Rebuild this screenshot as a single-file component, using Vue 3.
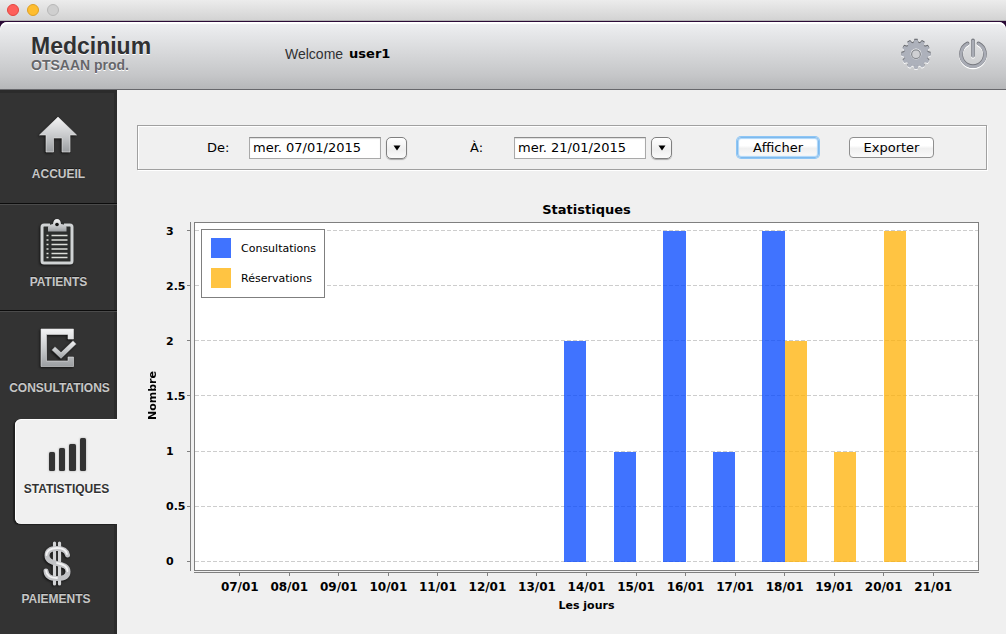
<script setup>
import { ref } from 'vue'

const dateFrom = ref('mer. 07/01/2015')
const dateTo = ref('mer. 21/01/2015')

const maxValue = 3
const ticks = ['3', '2.5', '2', '1.5', '1', '0.5', '0']
const series = [
  { key: 'consultations', label: 'Consultations' },
  { key: 'reservations', label: 'Réservations' },
]
const days = [
  { day: '07/01', consultations: 0, reservations: 0 },
  { day: '08/01', consultations: 0, reservations: 0 },
  { day: '09/01', consultations: 0, reservations: 0 },
  { day: '10/01', consultations: 0, reservations: 0 },
  { day: '11/01', consultations: 0, reservations: 0 },
  { day: '12/01', consultations: 0, reservations: 0 },
  { day: '13/01', consultations: 0, reservations: 0 },
  { day: '14/01', consultations: 2, reservations: 0 },
  { day: '15/01', consultations: 1, reservations: 0 },
  { day: '16/01', consultations: 3, reservations: 0 },
  { day: '17/01', consultations: 1, reservations: 0 },
  { day: '18/01', consultations: 3, reservations: 2 },
  { day: '19/01', consultations: 0, reservations: 1 },
  { day: '20/01', consultations: 0, reservations: 3 },
  { day: '21/01', consultations: 0, reservations: 0 },
]

function barHeight(value) {
  return { height: (value / maxValue) * 100 + '%' }
}

const gearTeeth = Array.from({ length: 12 }, (_, i) => i * 30)
</script>

<template>
  <div class="window">
    <div class="titlebar">
      <span class="light close"></span>
      <span class="light minimize"></span>
      <span class="light zoom"></span>
    </div>

    <div class="frame">
      <header class="header">
        <div class="brand">
          <h1>Medcinium</h1>
          <p>OTSAAN prod.</p>
        </div>
        <p class="welcome">Welcome <strong>user1</strong></p>
        <div class="tools">
          <button type="button" aria-label="Paramètres">
            <svg width="34" height="34" viewBox="-17 -17 34 34">
              <defs>
                <g id="gearShape">
                  <circle r="11.6" />
                  <path
                    v-for="angle in gearTeeth"
                    :key="angle"
                    d="M-3.2 -11 Q-1.8 -12 -1.6 -14.6 H1.6 Q1.8 -12 3.2 -11 Z"
                    :transform="`rotate(${angle})`"
                  />
                </g>
              </defs>
              <use href="#gearShape" fill="#fff" transform="translate(0 1.2)" />
              <use href="#gearShape" fill="#5f6166" transform="translate(0 -0.6)" />
              <use href="#gearShape" fill="#adb1bb" transform="translate(0 0.4)" />
              <circle r="5.4" fill="#fff" />
              <circle r="4.4" cy="0.3" fill="#cfd0d3" stroke="#85888e" stroke-width="1.2" />
            </svg>
          </button>
          <button type="button" aria-label="Quitter">
            <svg width="34" height="34" viewBox="-17 -17 34 34" fill="none" stroke-linecap="round">
              <g stroke="#fff" stroke-width="3.8" transform="translate(0 1.3)">
                <path d="M-5.5 -10.6 A12 12 0 1 0 5.5 -10.6" />
                <path d="M0 -13.5 V1.5" />
              </g>
              <g stroke="#75777d" stroke-width="3.8">
                <path d="M-5.5 -10.6 A12 12 0 1 0 5.5 -10.6" />
                <path d="M0 -13.5 V1.5" />
              </g>
              <g stroke="#a9acb5" stroke-width="2.8" transform="translate(0 0.6)">
                <path d="M-5.5 -10.6 A12 12 0 1 0 5.5 -10.6" />
                <path d="M0 -13.5 V1.5" />
              </g>
            </svg>
          </button>
        </div>
      </header>

      <div class="body">
        <nav class="sidebar">
          <a href="#accueil" class="item first">
            <svg class="icon" width="48" height="48" viewBox="1 0 48 48">
              <defs>
                <linearGradient id="metal" x1="0" y1="0" x2="0" y2="1">
                  <stop offset="0" stop-color="#f4f4f5" />
                  <stop offset="0.55" stop-color="#c6c8ca" />
                  <stop offset="1" stop-color="#9b9ea1" />
                </linearGradient>
              </defs>
              <path
                d="M24 7 L42.500 25 H36 V42 H28 V28 H19.500 V42 H12 V25 H5.500 Z"
                fill="url(#metal)" stroke="#e9e9ea" stroke-width="0.6"
              />
            </svg>
            <span>ACCUEIL</span>
          </a>

          <a href="#patients" class="item">
            <svg class="icon" width="48" height="48" viewBox="1 0 48 48">
              <rect x="8" y="7" width="30" height="38" rx="2" fill="#2c2e2d" stroke="#d0d3d4" stroke-width="3" />
              <path d="M16 4 H30 V13 H16 Z" fill="#2c2e2d" />
              <path
                d="M14 13.500 V9.500 Q14 7 17 6.500 L19 6 Q19.500 1 23 1 Q26.500 1 27 6 L29.500 6.500 Q32.500 7 32.500 9.500 V13.500 Z"
                fill="url(#metal)"
              />
              <circle cx="23" cy="6.500" r="1.800" fill="#151515" />
              <g stroke="#dcded9" stroke-width="1.500">
                <path d="M17.500 17.500 H33.500 M17.500 22 H33.500 M17.500 26.500 H33.500 M17.500 31 H33.500 M17.500 35.500 H33.500 M17.500 39.500 H33.500" />
                <path d="M12.500 17.500 H14.500 M12.500 22 H14.500 M12.500 26.500 H14.500 M12.500 31 H14.500 M12.500 35.500 H14.500 M12.500 39.500 H14.500" />
              </g>
            </svg>
            <span>PATIENTS</span>
          </a>

          <a href="#consultations" class="item">
            <svg class="icon" width="48" height="48" viewBox="0 0 48 48">
              <path
                d="M5 5 H37.500 V15 H32 V10.500 H10.500 V37 H32 V33 H37.500 V42.500 H5 Z"
                fill="url(#metal)" stroke="#e0e1e3" stroke-width="0.600"
              />
              <path d="M15.500 26 L19 22.500 L25 28 L37 16.500 L40.500 20 L25 35 Z" fill="url(#metal)" stroke="#2b2b2b" stroke-width="0.500" />
            </svg>
            <span>CONSULTATIONS</span>
          </a>

          <a href="#statistiques" class="item active" aria-current="page">
            <svg class="icon" width="48" height="48" viewBox="0 0 48 48" fill="#333">
              <rect x="6" y="27" width="6" height="19" rx="1.500" />
              <rect x="16" y="23" width="6" height="23" rx="1.500" />
              <rect x="26" y="19" width="7" height="27" rx="1.500" />
              <rect x="37" y="13" width="6" height="33" rx="1.500" />
            </svg>
            <span>STATISTIQUES</span>
          </a>

          <a href="#paiements" class="item last">
            <svg class="icon" width="48" height="48" viewBox="0 0 48 48" fill="none">
              <g stroke-linecap="round">
                <path d="M22.500 8 V49 M27.500 8 V49" stroke="#d2d3d5" stroke-width="3.200" />
                <path
                  d="M35.500 20 C34.500 15.500 30.500 13.500 25 13.500 C18.500 13.500 15 16 15 20.500 C15 25.500 19.500 27 25 28.500 C31.500 30 36 31.500 36 36.500 C36 41.500 31.500 43.500 25 43.500 C18.500 43.500 14.500 41.500 14 36"
                  stroke="#c2c3c6" stroke-width="5"
                />
                <path
                  d="M35 19 C34 15 30.500 13 25 13 C18.500 13 14.500 16 14.500 20 M25 28 C31.500 29.500 35.500 31 35.500 36 M14 35.500 C14.500 40 18.500 43 25 43"
                  stroke="#f2f2f3" stroke-width="1.800"
                />
              </g>
            </svg>
            <span>PAIEMENTS</span>
          </a>
        </nav>

        <main class="content">
          <form class="filters" @submit.prevent>
            <label for="date-from">De:</label>
            <input id="date-from" v-model="dateFrom" type="text" />
            <button type="button" class="picker" aria-label="Choisir la date de début">
              <svg width="8" height="6" viewBox="0 0 8 6"><path d="M0.500 0.500 H7.500 L4 5.500 Z" fill="#000" /></svg>
            </button>
            <label for="date-to" class="second">À:</label>
            <input id="date-to" v-model="dateTo" type="text" />
            <button type="button" class="picker" aria-label="Choisir la date de fin">
              <svg width="8" height="6" viewBox="0 0 8 6"><path d="M0.500 0.500 H7.500 L4 5.500 Z" fill="#000" /></svg>
            </button>
            <div class="actions">
              <button type="submit" class="action primary">Afficher</button>
              <button type="button" class="action">Exporter</button>
            </div>
          </form>

          <section class="chart">
            <h2>Statistiques</h2>
            <div class="y-title"><span>Nombre</span></div>
            <div class="y-axis">
              <span v-for="tick in ticks" :key="tick" class="y-tick">{{ tick }}</span>
            </div>
            <div class="plot">
              <div class="gridlines">
                <i v-for="tick in ticks" :key="tick"></i>
              </div>
              <div class="bars">
                <div v-for="d in days" :key="d.day" class="group">
                  <div v-for="s in series" :key="s.key" class="bar" :class="s.key" :style="barHeight(d[s.key])"></div>
                </div>
              </div>
              <ul class="legend">
                <li v-for="s in series" :key="s.key">
                  <span class="swatch" :class="s.key"></span>{{ s.label }}
                </li>
              </ul>
            </div>
            <div class="x-axis">
              <span v-for="d in days" :key="d.day" class="x-tick">{{ d.day }}</span>
            </div>
            <div class="x-title">Les jours</div>
          </section>
        </main>
      </div>
    </div>
  </div>
</template>

<style>
body {
  margin: 0;
}
</style>

<style scoped>
.window {
  display: flex;
  flex-direction: column;
  min-height: 100vh;
  background: #2a0a36;
  color: #000;
  font-family: "DejaVu Sans", "Noto Sans", sans-serif;
  font-size: 13px;
}

h1,
h2,
p,
ul {
  margin: 0;
  padding: 0;
}

button {
  font: inherit;
  color: inherit;
  padding: 0;
}

.titlebar {
  box-sizing: border-box;
  display: flex;
  align-items: center;
  gap: 8px;
  height: 21px;
  margin-bottom: 1px;
  padding-left: 7px;
  border-bottom: 1px solid #b0b0b0;
  background: linear-gradient(#ececec, #d3d3d3);
}

.light {
  box-sizing: border-box;
  width: 12px;
  height: 12px;
  border: 1px solid;
  border-radius: 50%;
}

.close {
  background: #fe5f5a;
  border-color: #e2463f;
}

.minimize {
  background: #febd2f;
  border-color: #dfa023;
}

.zoom {
  background: #cfcfcf;
  border-color: #b8b8b8;
}

.frame {
  flex: 1;
  display: flex;
  flex-direction: column;
  border-radius: 7px 7px 0 0;
  overflow: hidden;
  background: #f0f0f0;
}

.header {
  box-sizing: border-box;
  display: flex;
  align-items: flex-start;
  height: 68px;
  padding: 0 16px 0 31px;
  border-bottom: 1px solid #67676b;
  border-radius: 7px 7px 0 0;
  background: linear-gradient(#eff0f2, #d5d6d8 50%, #c5c6c8 80%, #b6b7b9);
  box-shadow: inset 0 2px 0 #fff;
}

.brand {
  width: 254px;
  padding-top: 12px;
  font-family: "Liberation Sans", Arial, sans-serif;
  text-shadow: 0 1px 0 #fff;
}

.brand h1 {
  font-size: 23px;
  line-height: 24px;
  color: #303133;
}

.brand p {
  font-size: 14px;
  font-weight: bold;
  line-height: 14px;
  color: #65666a;
}

.welcome {
  display: flex;
  align-items: center;
  gap: 6px;
  height: 63px;
  font-family: "Liberation Sans", Arial, sans-serif;
  font-size: 14px;
  color: #303133;
}

.welcome strong {
  font-family: "DejaVu Sans", sans-serif;
  font-size: 13px;
  color: #000;
}

.tools {
  display: flex;
  gap: 23px;
  margin-left: auto;
  padding-top: 15px;
}

.tools button {
  display: flex;
  border: 0;
  background: none;
}

.body {
  flex: 1;
  display: flex;
}

.sidebar {
  box-sizing: border-box;
  flex: none;
  display: flex;
  flex-direction: column;
  width: 117px;
  background: linear-gradient(to left, #2b2b2b 3px, #333 3px);
  box-shadow: inset 0 3px 0 #2b2b2b;
}

.item {
  box-sizing: border-box;
  display: flex;
  flex-direction: column;
  align-items: center;
  gap: 8px;
  min-height: 107px;
  padding-top: 13px;
  border-top: 1px solid #4b4b4b;
  border-bottom: 1px solid #0c0c0c;
  font-family: "Liberation Sans", Arial, sans-serif;
  font-size: 12px;
  font-weight: bold;
  line-height: 16px;
  text-decoration: none;
  color: #c6c6c6;
  text-shadow: 0 -1px 0 #1c1c1c;
}

.icon {
  overflow: visible;
  filter: drop-shadow(-1px 1px 1px #111);
}

.item.first {
  min-height: 114px;
  padding-top: 20px;
  border-top: 0;
}

.item:nth-child(3) {
  min-height: 108px;
  padding: 12px 0 0 2px;
  border-bottom: 0;
}

.item.active {
  min-height: 105px;
  margin-left: 15px;
  padding: 5px 0 0 1px;
  border-top: 1px solid #fff;
  border-bottom: 0;
  border-radius: 6px 0 0 6px;
  background: #f0f0f0;
  box-shadow: inset 1px 0 0 #fff, -2px 1px 1px #202020;
  color: #333;
  text-shadow: 0 1px 0 #fff;
}

.active .icon {
  filter: drop-shadow(0 0 1px #aaa);
}

.item.last {
  padding: 11px 5px 0 0;
  border: 0;
}

.content {
  flex: 1;
  display: flex;
  flex-direction: column;
  min-width: 0;
}

.filters {
  box-sizing: border-box;
  display: flex;
  align-items: center;
  height: 45px;
  margin: 35px 19px 0 20px;
  padding-left: 69px;
  border: 1px solid #a0a0a0;
  box-shadow: inset 1px 1px 0 #fff, 1px 1px 0 #fff;
}

.filters label {
  width: 42px;
}

.filters .second {
  width: 44px;
  margin-left: 63px;
}

.filters input {
  box-sizing: border-box;
  width: 132px;
  height: 22px;
  padding: 0 3px;
  border: 1px solid #a9a9a9;
  border-top-color: #8c8c8c;
  background: #fff;
  box-shadow: inset 0 1px 1px #ddd;
  font: inherit;
}

.picker {
  display: flex;
  align-items: center;
  justify-content: center;
  box-sizing: border-box;
  width: 21px;
  height: 22px;
  margin-left: 5px;
  border: 1px solid #808080;
  border-radius: 5px;
  background: linear-gradient(#fff, #efefef 60%, #fafafa);
  box-shadow: 0 1px 1px #aaa;
}

.actions {
  display: flex;
  gap: 30px;
  margin-left: 65px;
}

.action {
  box-sizing: border-box;
  width: 85px;
  height: 21px;
  border: 1px solid #8f8f8f;
  border-radius: 4px;
  background: linear-gradient(#fff, #fff 40%, #f0f0f0 55%, #fafafa);
}

.action.primary {
  width: 82px;
  border-color: #7fb9ec;
  box-shadow: 0 0 0 1px #8dc6f6, inset 0 0 1px 1px #a9d5fa;
}

.chart {
  flex: 1;
  display: grid;
  grid-template-columns: 12px 33px 1fr;
  grid-template-rows: 20px 1fr auto auto;
  margin-top: 30px;
  padding: 0 27px 20px 29px;
}

.chart h2 {
  grid-column: 3;
  margin-left: 3px;
  font-size: 13px;
  line-height: 20px;
  text-align: center;
}

.y-title {
  grid-column: 1;
  grid-row: 2;
  display: flex;
  align-items: center;
  justify-content: center;
  font-size: 11px;
  font-weight: bold;
}

.y-title span {
  writing-mode: vertical-rl;
  transform: rotate(180deg);
}

.y-axis {
  grid-column: 2;
  grid-row: 2;
  display: flex;
  flex-direction: column;
  justify-content: space-between;
  margin-top: 2px;
  padding: 9px 0 9px 8px;
  border-right: 1px solid #7f7f7f;
  font-size: 11px;
  font-weight: bold;
}

.y-tick {
  display: flex;
  align-items: center;
  justify-content: space-between;
  height: 0;
}

.y-tick::after {
  content: "";
  width: 3px;
  height: 1px;
  margin-top: -1px;
  background: #7f7f7f;
}

.plot {
  grid-column: 3;
  grid-row: 2;
  position: relative;
  display: grid;
  margin: 2px 0 0 3px;
  padding: 8px 0;
  border: 1px solid #7f7f7f;
  background: #fff;
}

.gridlines,
.bars {
  grid-area: 1 / 1;
}

.gridlines {
  display: flex;
  flex-direction: column;
  justify-content: space-between;
}

.gridlines i {
  height: 1px;
  margin: -1px 0 0;
  background: repeating-linear-gradient(to right, #cdcdcd 0 4px, transparent 4px 6px);
}

.bars {
  display: flex;
  padding: 0 20px;
  z-index: 1;
}

.group {
  flex: 1;
  display: flex;
  align-items: flex-end;
  justify-content: center;
}

.bar {
  width: 45%;
}

.consultations {
  background: rgba(0, 68, 255, 0.75);
}

.reservations {
  background: rgba(255, 176, 3, 0.75);
}

.legend {
  position: absolute;
  top: 6px;
  left: 6px;
  z-index: 2;
  display: flex;
  flex-direction: column;
  gap: 10px;
  padding: 8px 8px 9px 9px;
  border: 1px solid #7f7f7f;
  background: #fff;
  font-size: 11px;
  line-height: 22px;
  list-style: none;
}

.legend li {
  display: flex;
  gap: 10px;
  height: 20px;
}

.swatch {
  width: 20px;
  height: 20px;
}

.x-axis {
  grid-column: 3;
  display: flex;
  margin: 1px 0 0 3px;
  padding: 0 21px;
  border-top: 1px solid #7f7f7f;
  font-size: 12px;
  font-weight: bold;
  line-height: 16px;
}

.x-tick {
  flex: 1;
  display: flex;
  flex-direction: column;
  align-items: center;
  gap: 3px;
  min-width: 0;
}

.x-tick::before {
  content: "";
  width: 1px;
  height: 3px;
  background: #7f7f7f;
}

.x-title {
  grid-column: 3;
  margin: 3px 0 0 3px;
  font-size: 11px;
  font-weight: bold;
  line-height: 16px;
  text-align: center;
}
</style>
